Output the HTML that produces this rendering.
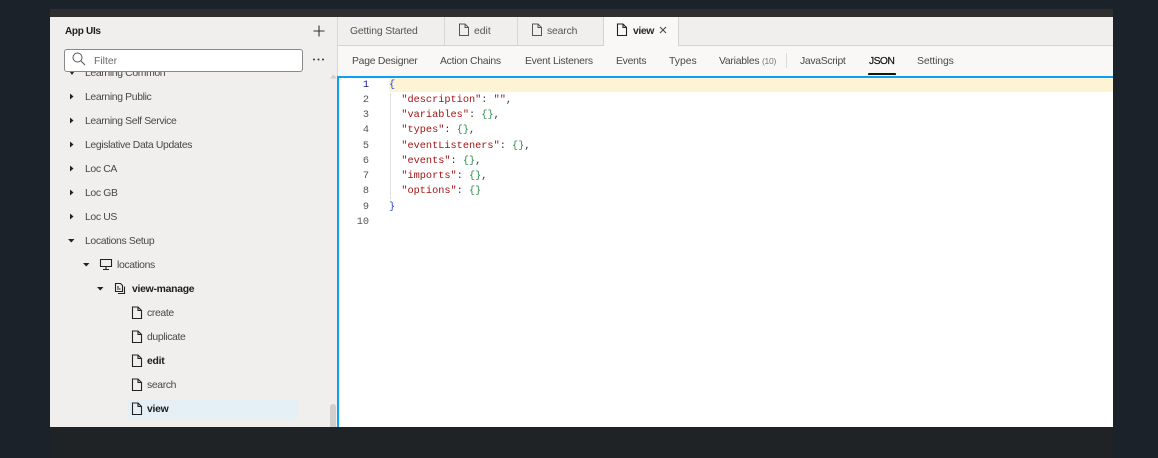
<!DOCTYPE html>
<html><head><meta charset="utf-8"><style>
html,body{margin:0;padding:0;width:1158px;height:458px;overflow:hidden;background:#1b2229}
body{position:relative;font-family:"Liberation Sans",sans-serif;font-size:10.4px;color:#4a4845}
.a,.t,.c,.n,svg{position:absolute}
.a{display:block}
.t{white-space:nowrap;line-height:14px;letter-spacing:-.35px}
.m{letter-spacing:-.25px}
.b{font-weight:bold;color:#1f1d1b;letter-spacing:-.27px}
.n{font:10.25px/15px "Liberation Mono",monospace;width:30px;text-align:right;left:339px;color:#555}
.c{font:10.25px/15px "Liberation Mono",monospace;white-space:pre;left:389px;color:#333}
.k{color:#a31515}.g{color:#2f8a4e}.u{color:#2a3fd0}
.d{stroke:#222;fill:none;stroke-width:1.1}
</style></head><body>
<div class="a" style="left:50px;top:9px;width:1063px;height:8px;background:#2f2f2f"></div>
<div class="a" style="left:50px;top:427px;width:1108px;height:31px;background:#1f2326"></div>
<div class="a" style="left:1113px;top:0;width:45px;height:458px;background:#1b2229"></div>
<div class="a" style="left:50px;top:17px;width:287px;height:410px;background:#f0efed"></div>
<div class="a" style="left:337px;top:17px;width:776px;height:29px;background:#f0efed"></div>
<div class="a" style="left:337px;top:45px;width:776px;height:1px;background:#d4d3d1"></div>
<div class="a" style="left:337px;top:46px;width:776px;height:30px;background:#f9f8f6"></div>
<div class="a" style="left:337px;top:17px;width:1px;height:60px;background:#d8d7d5"></div>
<div class="a" style="left:444px;top:17px;width:1px;height:28px;background:#d8d7d5"></div>
<div class="a" style="left:517px;top:17px;width:1px;height:28px;background:#d8d7d5"></div>
<div class="a" style="left:603px;top:17px;width:76px;height:29px;background:#f9f8f6;border-right:1px solid #d4d3d1;border-left:1px solid #d4d3d1;box-sizing:border-box"></div>
<div class="a" style="left:338px;top:76px;width:775px;height:351px;background:#fff"></div>
<div class="a" style="left:337px;top:76px;width:776px;height:2px;background:#0d9ef5"></div>
<div class="a" style="left:337px;top:76px;width:2px;height:351px;background:#0d9ef5"></div>
<div class="a" style="left:389px;top:78px;width:724px;height:14px;background:#fdf4d6"></div>

<span class="t b" style="left:65px;top:25px;font-size:10px;letter-spacing:-.3px">App UIs</span>
<svg style="left:312px;top:24px" width="14" height="14"><path d="M7 1.500V12.500M1.500 7H12.500" stroke="#333" stroke-width="1.1" fill="none"/></svg>
<div class="a" style="left:64px;top:49px;width:239px;height:23px;background:#fff;border:1px solid #8a8886;border-radius:3px;box-sizing:border-box;z-index:2"></div>
<svg style="left:71px;top:51px;z-index:3" width="16" height="16"><circle cx="6.500" cy="6.500" r="4.500" fill="none" stroke="#555" stroke-width="1"/><path d="M10 10L14 14" stroke="#555" stroke-width="1.1"/></svg>
<span class="t" style="left:94px;top:55px;color:#6b6967;z-index:3;letter-spacing:0">Filter</span>
<svg style="left:312px;top:57px" width="14" height="6"><circle cx="2" cy="2.500" r="1" fill="#333"/><circle cx="6.500" cy="2.500" r="1" fill="#333"/><circle cx="11" cy="2.500" r="1" fill="#333"/></svg>

<svg style="left:70px;top:72px" width="4" height="3"><path d="M0 0H4L2 3Z" fill="#222"/></svg>
<span class="t" style="left:85px;top:67px">Learning Common</span>

<svg style="left:70px;top:93px" width="4" height="7"><path d="M0 .5L3.500 3.500L0 6.500Z" fill="#222"/></svg><span class="t" style="left:85px;top:91px">Learning Public</span>
<svg style="left:70px;top:117px" width="4" height="7"><path d="M0 .5L3.500 3.500L0 6.500Z" fill="#222"/></svg><span class="t" style="left:85px;top:115px">Learning Self Service</span>
<svg style="left:70px;top:141px" width="4" height="7"><path d="M0 .5L3.500 3.500L0 6.500Z" fill="#222"/></svg><span class="t" style="left:85px;top:139px">Legislative Data Updates</span>
<svg style="left:70px;top:165px" width="4" height="7"><path d="M0 .5L3.500 3.500L0 6.500Z" fill="#222"/></svg><span class="t" style="left:85px;top:163px">Loc CA</span>
<svg style="left:70px;top:189px" width="4" height="7"><path d="M0 .5L3.500 3.500L0 6.500Z" fill="#222"/></svg><span class="t" style="left:85px;top:187px">Loc GB</span>
<svg style="left:70px;top:213px" width="4" height="7"><path d="M0 .5L3.500 3.500L0 6.500Z" fill="#222"/></svg><span class="t" style="left:85px;top:211px">Loc US</span>

<svg style="left:68px;top:239px" width="7" height="4"><path d="M0 0H6.500L3.250 3.500Z" fill="#222"/></svg><span class="t" style="left:85px;top:235px">Locations Setup</span>
<svg style="left:83px;top:263px" width="7" height="4"><path d="M0 0H6.500L3.250 3.500Z" fill="#222"/></svg>
<svg style="left:99px;top:258px" width="14" height="13"><path class="d" d="M1.500 1.500H12.500V8.500H1.500ZM7 8.500V11.500M4 11.500H10"/></svg>
<span class="t" style="left:117px;top:259px">locations</span>
<svg style="left:97px;top:287px" width="7" height="4"><path d="M0 0H6.500L3.250 3.500Z" fill="#222"/></svg>
<svg style="left:114px;top:282px" width="13" height="13"><path class="d" d="M1.500 1.500H6.500L8.500 3.500V9.500H1.500ZM3 5H5M3 7H6.500M10.500 4.500V11.500H4"/></svg>
<span class="t b" style="left:132px;top:283px">view-manage</span>

<div class="a" style="left:128px;top:400px;width:170px;height:19px;background:#e4f0f6;border-radius:2px"></div>
<svg style="left:131px;top:306px" width="12" height="14"><path class="d" d="M1.500 1H7L10.500 4.500V12.500H1.500ZM7 1V4.500H10.500"/></svg><span class="t" style="left:147px;top:307px">create</span>
<svg style="left:131px;top:330px" width="12" height="14"><path class="d" d="M1.500 1H7L10.500 4.500V12.500H1.500ZM7 1V4.500H10.500"/></svg><span class="t" style="left:147px;top:331px">duplicate</span>
<svg style="left:131px;top:354px" width="12" height="14"><path class="d" d="M1.500 1H7L10.500 4.500V12.500H1.500ZM7 1V4.500H10.500"/></svg><span class="t b" style="left:147px;top:355px">edit</span>
<svg style="left:131px;top:378px" width="12" height="14"><path class="d" d="M1.500 1H7L10.500 4.500V12.500H1.500ZM7 1V4.500H10.500"/></svg><span class="t" style="left:147px;top:379px">search</span>
<svg style="left:131px;top:402px" width="12" height="14"><path class="d" d="M1.500 1H7L10.500 4.500V12.500H1.500ZM7 1V4.500H10.500"/></svg><span class="t b" style="left:147px;top:403px">view</span>
<div class="a" style="left:330px;top:404px;width:6px;height:23px;background:#d0cfcd;border-radius:3px 3px 0 0"></div>
<svg style="left:330px;top:74px" width="7" height="5"><path d="M0 4.500L3.500 .5L7 4.500Z" fill="#d0cfcd"/></svg>

<span class="t" style="left:350px;top:25px;color:#57544f;letter-spacing:-.15px">Getting Started</span>
<svg style="left:458px;top:23px" width="12" height="14"><path d="M1.500 1H7L10.500 4.500V12.500H1.500ZM7 1V4.500H10.500" fill="none" stroke="#555" stroke-width="1"/></svg><span class="t" style="left:474px;top:25px;color:#57544f;letter-spacing:0">edit</span>
<svg style="left:531px;top:23px" width="12" height="14"><path d="M1.500 1H7L10.500 4.500V12.500H1.500ZM7 1V4.500H10.500" fill="none" stroke="#555" stroke-width="1"/></svg><span class="t" style="left:547px;top:25px;color:#57544f;letter-spacing:-.15px">search</span>
<svg style="left:616px;top:23px" width="12" height="14"><path class="d" d="M1.500 1H7L10.500 4.500V12.500H1.500ZM7 1V4.500H10.500"/></svg><span class="t b" style="left:633px;top:25px;color:#2b2926;letter-spacing:-.4px">view</span>
<svg style="left:659px;top:26px" width="8" height="8"><path d="M1 1L7 7M7 1L1 7" stroke="#444" stroke-width="1"/></svg>

<span class="t m" style="left:352px;top:55px">Page Designer</span>
<span class="t m" style="left:440px;top:55px">Action Chains</span>
<span class="t m" style="left:525px;top:55px">Event Listeners</span>
<span class="t m" style="left:616px;top:55px">Events</span>
<span class="t m" style="left:669px;top:55px;letter-spacing:0">Types</span>
<span class="t m" style="left:719px;top:55px">Variables <span style="font-size:8.500px;color:#77757a;line-height:0">(10)</span></span>
<div class="a" style="left:786px;top:53px;width:1px;height:15px;background:#dcdbd9"></div>
<span class="t m" style="left:800px;top:55px;letter-spacing:-.3px">JavaScript</span>
<span class="t" style="left:869px;top:55px;letter-spacing:-.6px;color:#161513;-webkit-text-stroke:.2px #161513">JSON</span>
<div class="a" style="left:868px;top:73px;width:28px;height:2px;background:#161513;border-radius:1px 1px 0 0"></div>
<span class="t m" style="left:917px;top:55px;letter-spacing:-.1px">Settings</span>

<div class="n" style="top:78px;color:#1a1a8c">1</div>
<div class="n" style="top:93px">2</div>
<div class="n" style="top:108px">3</div>
<div class="n" style="top:123px">4</div>
<div class="n" style="top:139px">5</div>
<div class="n" style="top:154px">6</div>
<div class="n" style="top:169px">7</div>
<div class="n" style="top:184px">8</div>
<div class="n" style="top:200px">9</div>
<div class="n" style="top:215px">10</div>
<div class="a" style="left:390px;top:93px;width:1px;height:106px;background:#dedede"></div>
<div class="c" style="top:78px"><span class="u">{</span></div>
<div class="c" style="top:93px">  <span class="k">"description"</span>: <span class="k">""</span>,</div>
<div class="c" style="top:108px">  <span class="k">"variables"</span>: <span class="g">{}</span>,</div>
<div class="c" style="top:123px">  <span class="k">"types"</span>: <span class="g">{}</span>,</div>
<div class="c" style="top:139px">  <span class="k">"eventListeners"</span>: <span class="g">{}</span>,</div>
<div class="c" style="top:154px">  <span class="k">"events"</span>: <span class="g">{}</span>,</div>
<div class="c" style="top:169px">  <span class="k">"imports"</span>: <span class="g">{}</span>,</div>
<div class="c" style="top:184px">  <span class="k">"options"</span>: <span class="g">{}</span></div>
<div class="c" style="top:200px"><span class="u">}</span></div>
</body></html>
